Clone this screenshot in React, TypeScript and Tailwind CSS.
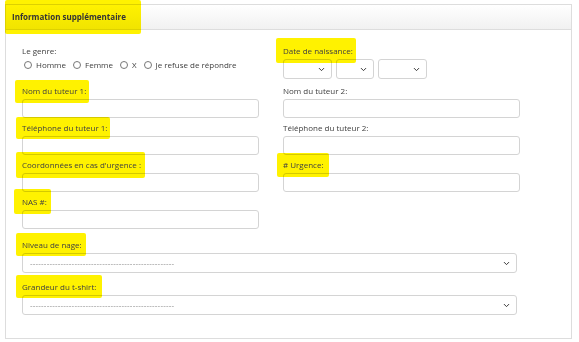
import { ChevronDown } from 'lucide-react';

const DASHES = '-'.repeat(52);

function Mark({ className }: { className: string }) {
  return <span className={`absolute bg-[#fff200] mix-blend-multiply rounded-[2px] pointer-events-none ${className}`} />;
}

function Label({ text, mark }: { text: string; mark?: string }) {
  return (
    <div className="h-[14px] leading-[14px] mb-[1px]">
      <span className="relative inline-block">
        {mark && <Mark className={mark} />}
        <span className="relative">{text}</span>
      </span>
    </div>
  );
}

function TextBox({ w = 'w-[237px]' }: { w?: string }) {
  return <div className={`h-[19px] ${w} border border-[#d4d4d4] rounded-[3px] bg-white`} />;
}

function SelectBox({ w, dashes = false }: { w: string; dashes?: boolean }) {
  return (
    <div className={`h-[20px] ${w} border border-[#d4d4d4] rounded-[3px] bg-white flex items-center justify-between pl-[7px] pr-[5px]`}>
      <span className="text-[8px] leading-none text-[#888] tracking-[0.2px]">{dashes ? DASHES : ''}</span>
      <ChevronDown className="w-[9px] h-[9px] text-[#333]" strokeWidth={2.6} />
    </div>
  );
}

function Radio({ label }: { label: string }) {
  return (
    <span className="flex items-center gap-[4px]">
      <span className="w-[8px] h-[8px] rounded-full border border-[#777] bg-white" />
      <span>{label}</span>
    </span>
  );
}

function Field({ label, mark }: { label: string; mark?: string }) {
  return (
    <div>
      <Label text={label} mark={mark} />
      <TextBox />
    </div>
  );
}

export default function App() {
  return (
    <div className="w-[579px] h-[342px] bg-white overflow-hidden pt-[4px] pl-[5px] text-[8px] text-[#404040] [font-family:'Open_Sans',sans-serif]">
      <div className="w-[567px] h-[335px] border border-[#dddddd]">
        {/* Header */}
        <div className="h-[25px] border-b border-[#dddddd] bg-gradient-to-b from-white to-[#f1f1f1] flex items-center pl-[6px]">
          <span className="relative inline-block">
            <Mark className="-left-[7px] -right-[15px] -top-[11px] -bottom-[11px]" />
            <span className="relative font-bold text-[#333] text-[8px]">Information supplémentaire</span>
          </span>
        </div>

        {/* Body */}
        <div className="pl-[16px] pt-[13px]">
          <div className="grid grid-cols-[261px_261px] gap-y-[3px]">
            <div className="pt-[1px] pb-[2px]">
              <div className="h-[14px] leading-[14px]">Le genre:</div>
              <div className="flex items-center gap-[7px] pl-[2px] h-[13px]">
                <Radio label="Homme" />
                <Radio label="Femme" />
                <Radio label="X" />
                <Radio label="Je refuse de répondre" />
              </div>
            </div>
            <div className="pt-[1px] pb-[2px]">
              <Label text="Date de naissance:" mark="-left-[7px] -right-[3px] -top-[6px] -bottom-[5px]" />
              <div className="flex gap-[4px]">
                <SelectBox w="w-[49px]" />
                <SelectBox w="w-[38px]" />
                <SelectBox w="w-[49px]" />
              </div>
            </div>

            <Field label="Nom du tuteur 1:" mark="-left-[7px] -right-[3px] -top-[4px] -bottom-[5px]" />
            <Field label="Nom du tuteur 2:" />

            <Field label="Téléphone du tuteur 1:" mark="-left-[6px] -right-[3px] -top-[4px] -bottom-[4px]" />
            <Field label="Téléphone du tuteur 2:" />

            <Field label="Coordonnées en cas d'urgence :" mark="-left-[6px] -right-[4px] -top-[6px] -bottom-[6px]" />
            <Field label="# Urgence:" mark="-left-[6px] -right-[5px] -top-[5px] -bottom-[5px]" />

            <Field label="NAS #:" mark="-left-[8px] -right-[4px] -top-[6px] -bottom-[5px]" />
            <div />
          </div>

          <div className="mt-[9px]">
            <Label text="Niveau de nage:" mark="-left-[6px] -right-[4px] -top-[5px] -bottom-[4px]" />
            <SelectBox w="w-[495px]" dashes />
          </div>
          <div className="mt-[7px]">
            <Label text="Grandeur du t-shirt:" mark="-left-[6px] -right-[6px] -top-[5px] -bottom-[4px]" />
            <SelectBox w="w-[495px]" dashes />
          </div>
        </div>
      </div>
    </div>
  );
}
